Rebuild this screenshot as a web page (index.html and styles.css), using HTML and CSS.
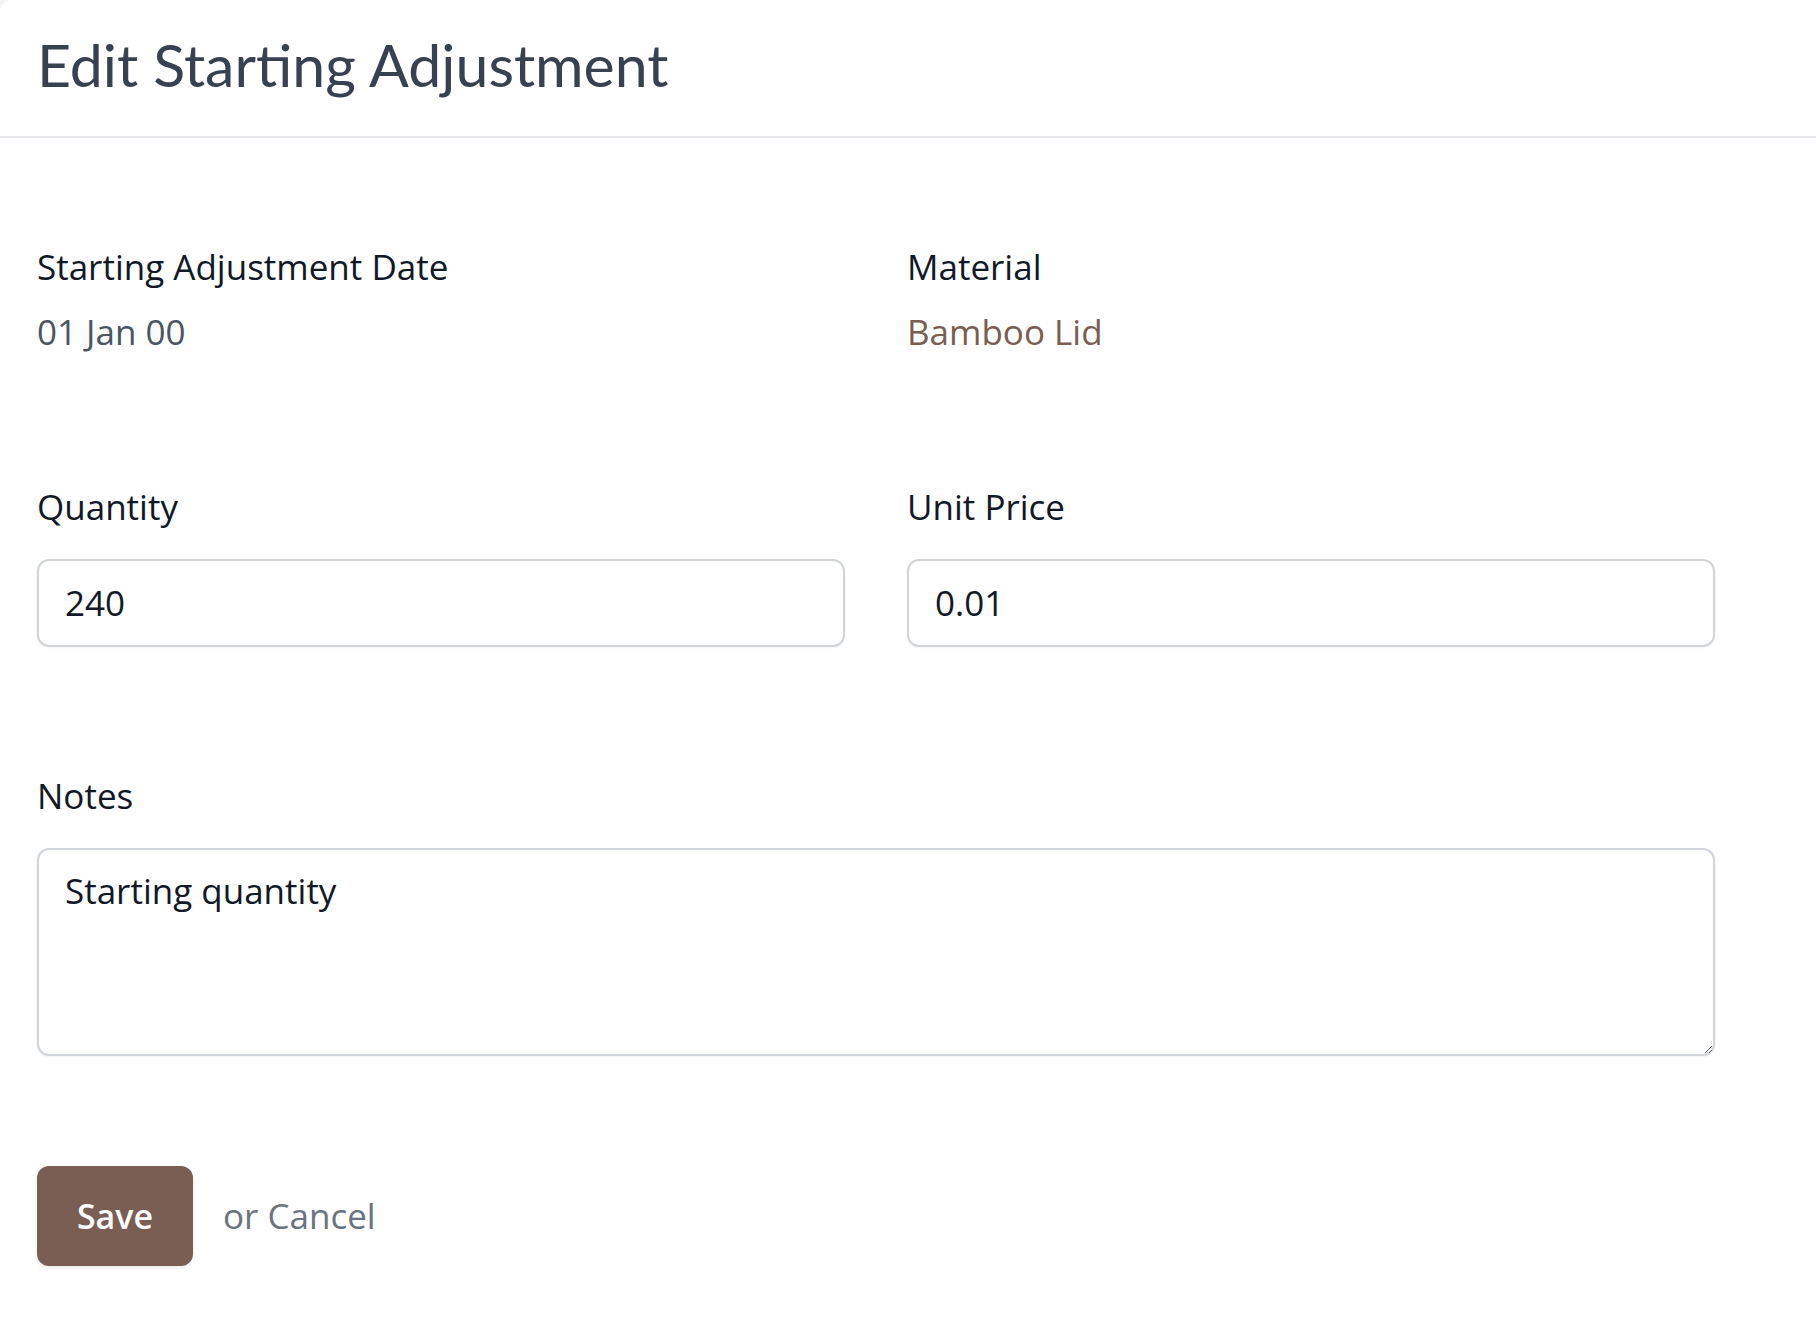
FILE: index.html
```html
<!DOCTYPE html>
<html lang="en">
<head>
    <meta charset="UTF-8">
    <meta name="viewport" content="width=device-width, initial-scale=1.0">
    <title>Edit Starting Adjustment</title>
    <link rel="stylesheet" href="styles.css">
</head>
<body>

    <div class="card">
        <div class="header">
            <h1 class="title">Edit Starting Adjustment</h1>
        </div>

        <form class="form">
            <div class="row">
                <div class="field detail">
                    <div class="field-label">Starting Adjustment Date</div>
                    <div class="value">01 Jan 00</div>
                </div>
                <div class="field detail">
                    <div class="field-label">Material</div>
                    <a class="value link" href="#">Bamboo Lid</a>
                </div>
            </div>

            <div class="row">
                <div class="field">
                    <label class="field-label" for="quantity">Quantity</label>
                    <input id="quantity" type="text" value="240">
                </div>
                <div class="field">
                    <label class="field-label" for="unitPrice">Unit Price</label>
                    <input id="unitPrice" type="text" value="0.01">
                </div>
            </div>

            <div class="field notes">
                <label class="field-label" for="notes">Notes</label>
                <textarea id="notes">Starting quantity</textarea>
            </div>

            <div class="actions">
                <button type="submit" class="save-btn">Save</button>
                <span class="cancel">or <a href="#">Cancel</a></span>
            </div>
        </form>
    </div>

</body>
</html>
```

FILE: styles.css
```css
* {
    box-sizing: border-box;
}
body {
    margin: 0;
    font-family: "Open Sans", Arial, sans-serif;
    font-size: 35px;
    line-height: 52px;
    color: #111827;
    background-color: #f3f4f6;
}
.card {
    min-height: 100vh;
    background-color: #fff;
    border-top-left-radius: 12px;
}
.header {
    padding: 29px 37px 35px;
    border-bottom: 2px solid #e5e7eb;
}
.title {
    margin: 0;
    font-family: Lato, "Open Sans", sans-serif;
    font-size: 59px;
    font-weight: 400;
    line-height: 72px;
    color: #374151;
}
.form {
    width: 1752px;
    padding: 103px 37px 0;
}
.row {
    display: grid;
    grid-template-columns: 1fr 1fr;
    column-gap: 62px;
    margin-bottom: 123px;
}
.field-label {
    display: block;
    margin-bottom: 26px;
    color: #111827;
}
.detail .field-label {
    margin-bottom: 13px;
}
.value {
    display: block;
    color: #4b5563;
}
.link {
    color: #7a5e54;
    text-decoration: none;
}
input, textarea {
    display: block;
    width: 100%;
    font-family: "Open Sans", Arial, sans-serif;
    font-size: 35px;
    line-height: 52px;
    color: #111827;
    background-color: #fff;
    border: 2px solid #d1d5db;
    border-radius: 12px;
    box-shadow: 0 1px 2px rgba(0,0,0,0.05);
    padding: 16px 26px;
    outline: none;
}
textarea {
    height: 208px;
    padding-top: 15px;
    resize: vertical;
}
.notes {
    margin-bottom: 110px;
}
.actions {
    display: flex;
    align-items: center;
    gap: 30px;
}
.save-btn {
    width: 156px;
    height: 100px;
    padding: 0;
    font-family: "Open Sans", Arial, sans-serif;
    font-size: 34px;
    font-weight: 600;
    color: #fff;
    background-color: #7a5e54;
    border: none;
    border-radius: 12px;
    box-shadow: 0 2px 4px rgba(0,0,0,0.08);
    cursor: pointer;
}
.cancel {
    font-size: 35px;
    color: #6b7280;
}
.cancel a {
    color: #6b7280;
    text-decoration: none;
}
```
